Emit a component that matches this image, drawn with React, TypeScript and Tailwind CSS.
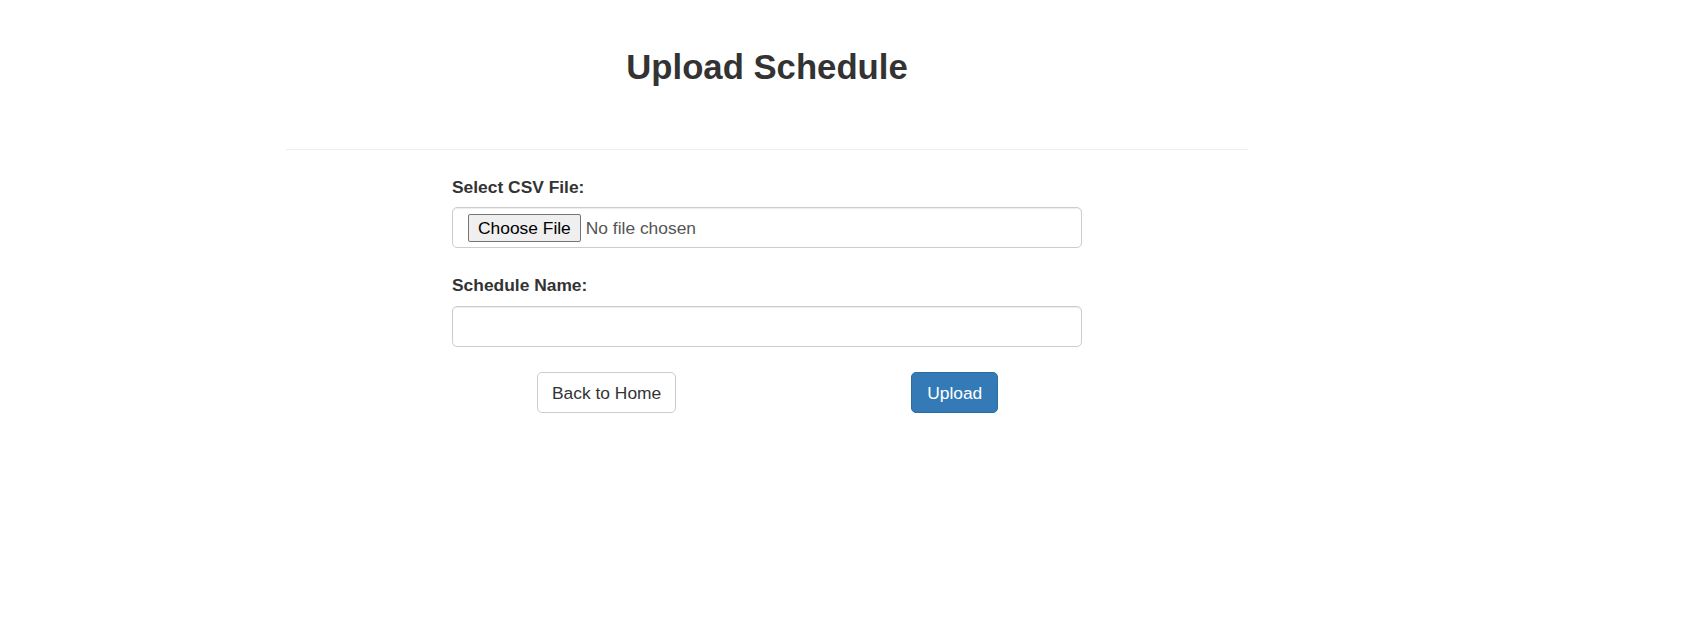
export default function App() {
  return (
    <div className="min-h-screen bg-white font-['Liberation_Sans',Arial,sans-serif] text-[#333]">
      <div className="ml-[286px] w-[962px]">
        <h1 className="pt-[48px] text-center text-[34.7px] font-bold leading-[38px]">Upload Schedule</h1>
        <hr className="mt-[63px] border-0 border-t border-[#eee]" />
        <form className="ml-[166px] w-[630px]" onSubmit={(e) => e.preventDefault()}>
          <label className="mt-[25px] block text-[17.4px] font-bold leading-[24px]">Select CSV File:</label>
          <div className="mt-[8px] flex h-[41px] items-center rounded-[5px] border border-[#ccc] bg-white px-[15px] shadow-[inset_0_1px_1px_rgba(0,0,0,0.075)]">
            <span className="rounded-[2px] border border-[#767676] bg-[#efefef] px-[9px] py-[3px] text-[17.4px] leading-[20px] text-black">
              Choose File
            </span>
            <span className="ml-[5px] text-[17.4px] leading-[20px] text-[#555]">No file chosen</span>
          </div>
          <label className="mt-[25px] block text-[17.4px] font-bold leading-[24px]">Schedule Name:</label>
          <input
            type="text"
            className="mt-[9px] block h-[41px] w-full rounded-[5px] border border-[#ccc] bg-white px-[14px] text-[17.4px] text-[#555] shadow-[inset_0_1px_1px_rgba(0,0,0,0.075)] outline-none"
          />
          <div className="mt-[25px] flex items-center">
            <button
              type="button"
              className="ml-[85px] h-[41px] rounded-[5px] border border-[#ccc] bg-white px-[14px] text-[17.4px] leading-[24px] text-[#333]"
            >
              Back to Home
            </button>
            <button
              type="submit"
              className="ml-[235px] h-[41px] w-[87px] rounded-[5px] border border-[#2e6da4] bg-[#337ab7] text-[17.4px] leading-[24px] text-white"
            >
              Upload
            </button>
          </div>
        </form>
      </div>
    </div>
  );
}
